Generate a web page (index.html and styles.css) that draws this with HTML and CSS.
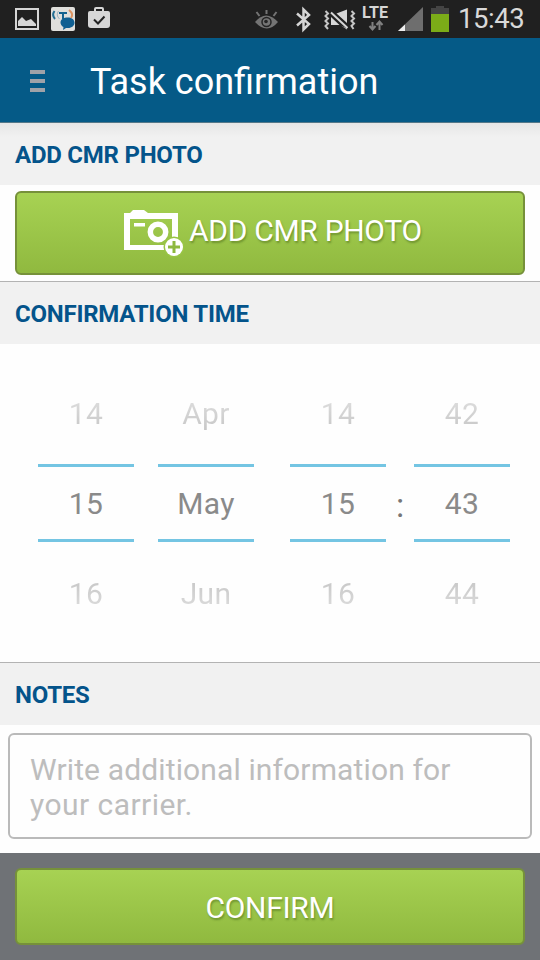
FILE: index.html
```html
<!DOCTYPE html>
<html lang="en">
<head>
<meta charset="utf-8">
<title>Task confirmation</title>
<link rel="stylesheet" href="styles.css">
</head>
<body>
<div class="status">
  <svg class="notifications" width="112" height="38" viewBox="0 0 112 38">
    <rect x="16" y="9" width="22" height="20" fill="none" stroke="#d6d6d6" stroke-width="2"/>
    <path d="M18 26v-5l2-2 2-2 4 4 5-2 5 5v2z" fill="#d6d6d6"/>
    <rect x="51" y="7" width="24" height="24" rx="2" fill="#e0dfdc"/>
    <path d="M54.500 11q-3 4 .5 8" fill="none" stroke="#226d92" stroke-width="2"/>
    <path d="M58.500 11q-3 4 1 8" fill="none" stroke="#9ab3c0" stroke-width="1"/>
    <path d="M69 10q5 4 2 8" fill="none" stroke="#dd9362" stroke-width="2"/>
    <path d="M59 13h8M63 13v6" stroke="#15628f" stroke-width="2"/>
    <path d="M68 17.500c4 0 6.500 2.500 6.500 5.200S72 28 68 28h-2l-3 2 .5-3c-2-1-3-2.700-3-4.500 0-3 3-5 7.500-5z" fill="#115f91"/>
    <path d="M90 11h18a2 2 0 0 1 2 2v12a3 3 0 0 1-3 3H91a3 3 0 0 1-3-3V13a2 2 0 0 1 2-2z" fill="#d6d6d6"/>
    <path d="M95 12V9q0-1 1-1h6q1 0 1 1v3" fill="none" stroke="#d6d6d6" stroke-width="2"/>
    <path d="M94 19.500l4 4 6.500-7" fill="none" stroke="#222" stroke-width="2"/>
  </svg>
  <div class="system">
    <svg width="195" height="38" viewBox="255 0 195 38">
      <path d="M255 22q11-13 23 0-11 13-23 0z" fill="#747474"/>
      <circle cx="266.500" cy="22" r="4.500" fill="none" stroke="#242424" stroke-width="1.500"/>
      <circle cx="266" cy="21.500" r="1.800" fill="#242424"/>
      <path d="M256.500 12l3 4M266.500 10v4M276.500 12l-3 4" stroke="#747474" stroke-width="2"/>
      <path d="M297 13.500l12 10.500-5.500 5.500V9.500l5.500 5.500-12 10.500" fill="none" stroke="#d6d6d6" stroke-width="2.500"/>
      <path d="M331 17v8h8.500zM336.500 13.500L347 9.500v13.500zM341 25.500l6 4v-1z" fill="#d6d6d6"/>
      <path d="M331 12.500l16.500 15.500" stroke="#d6d6d6" stroke-width="2"/>
      <path d="M325.500 11l2.500 2.500-2.500 2.500 2.500 2.500-2.500 2.500 2.500 2.500-2.500 2.500 2.500 3M351.500 11l2.500 2.500-2.500 2.500 2.500 2.500-2.500 2.500 2.500 2.500-2.500 2.500 2 3" fill="none" stroke="#c5c5c5" stroke-width="2"/>
      <text class="network" x="362" y="17.500" textLength="26" lengthAdjust="spacingAndGlyphs">LTE</text>
      <path d="M372.500 22v7M369.500 26l3 3.500 3-3.500M379.500 30v-8M376.500 25l3-3.500 3 3.500" fill="none" stroke="#808080" stroke-width="2"/>
      <path d="M398 31L423 7v24z" fill="#6e6e6e"/>
      <path d="M398 31l7-6.500V31z" fill="#eee"/>
      <path d="M431 14V8h5V6h8v2h5v6z" fill="#444"/>
      <path d="M431 14h18v18h-18z" fill="#7bac18"/>
    </svg>
    <span class="clock">15:43</span>
  </div>
</div>

<header class="appbar">
  <div class="menu"><i></i><i></i><i></i></div>
  <h1>Task confirmation</h1>
</header>

<main>
  <h2 class="section first">ADD CMR PHOTO</h2>
  <div class="photo">
    <button class="btn add">
      <svg width="62" height="50" viewBox="0 0 62 50">
        <path fill="#fff" fill-rule="evenodd" d="M1 4H7L10 1H21L25 4H55V31H49V10H7V36H43V41H1z"/>
        <path d="M11 14h11v3.500H11z" fill="#fff"/>
        <circle cx="35" cy="23" r="7.700" fill="none" stroke="#fff" stroke-width="5.500"/>
        <circle cx="51" cy="38" r="10.500" fill="#99c544"/>
        <circle cx="51" cy="38" r="9" fill="#fff"/>
        <path d="M51 32v12M45 38h12" stroke="#8eb93f" stroke-width="3"/>
      </svg>
      <span>ADD CMR PHOTO</span>
    </button>
  </div>

  <h2 class="section">CONFIRMATION TIME</h2>
  <div class="picker">
    <div class="wheel"><span class="prev">14</span><b>15</b><span class="next">16</span></div>
    <div class="wheel"><span class="prev">Apr</span><b>May</b><span class="next">Jun</span></div>
    <div class="wheel hour"><span class="prev">14</span><b>15</b><span class="next">16</span></div>
    <div class="colon">:</div>
    <div class="wheel"><span class="prev">42</span><b>43</b><span class="next">44</span></div>
  </div>

  <h2 class="section">NOTES</h2>
  <div class="notes">Write additional information for<br><span>your carrier.</span></div>
</main>

<footer class="actions">
  <button class="btn confirm">CONFIRM</button>
</footer>
</body>
</html>
```
FILE: styles.css
```css
* { box-sizing: border-box; }

body {
  margin: 0;
  width: 540px;
  height: 960px;
  display: flex;
  flex-direction: column;
  overflow: hidden;
  background: #fefefe;
  font-family: Roboto, "Liberation Sans", sans-serif;
}

svg { display: block; flex: none; }

.status {
  height: 38px;
  display: flex;
  justify-content: space-between;
  background: #202020;
}

.system {
  display: flex;
  width: 285px;
}

.network {
  font-size: 16px;
  font-weight: 700;
  fill: #d6d6d6;
}

.clock {
  margin-left: 8px;
  line-height: 38px;
  font-size: 27.5px;
  letter-spacing: -.45px;
  color: #d9d9d9;
}

.appbar {
  height: 85px;
  display: flex;
  align-items: center;
  padding-left: 30px;
  background: #055a87;
  border-bottom: 1px solid #547889;
}

.menu {
  width: 15px;
  display: grid;
  gap: 5px;
  margin: 2px 45px 0 0;
}

.menu i {
  height: 4px;
  background: #a0a2a8;
}

h1 {
  margin: 3px 0 0;
  font-size: 36px;
  font-weight: 400;
  line-height: 44px;
  color: #fff;
  white-space: nowrap;
}

.section {
  height: 63px;
  margin: 0;
  padding-left: 15px;
  border-top: 1px solid #b3b3b3;
  background: #f1f1f1;
  color: #04548b;
  font-size: 24px;
  font-weight: 700;
  letter-spacing: -.24px;
  line-height: 64px;
  white-space: nowrap;
}

.section.first {
  height: 62px;
  border-top: 0;
  background: linear-gradient(#e6e6e6, #f1f1f1 14px);
}

.photo {
  height: 96px;
  padding: 6px 15px;
}

.btn {
  display: flex;
  align-items: center;
  justify-content: center;
  width: 510px;
  padding: 0;
  border: 2px solid #76913a;
  border-radius: 6px;
  background: linear-gradient(#a7d253, #90b93f);
  color: #fff;
  font: 400 30px/36px Roboto, "Liberation Sans", sans-serif;
  letter-spacing: -.3px;
  text-shadow: 1px 2px 2px rgba(60, 90, 20, .45);
}

.btn.add {
  height: 84px;
  justify-content: flex-start;
  padding-left: 106px;
}

.btn.add svg { margin-top: 2px; }

.btn.add span { margin: -5px 0 0 4px; }

.picker {
  height: 318px;
  display: flex;
  padding: 30px 30px 0 38px;
}

.wheel {
  width: 96px;
  margin-right: 24px;
  display: grid;
  grid-template-rows: 90px 78px 90px;
  text-align: center;
  font-size: 30px;
  letter-spacing: .3px;
}

.wheel span,
.wheel b {
  font-weight: 400;
}

.wheel .prev,
.wheel .next {
  color: transparent;
  background: linear-gradient(#dedede, #c6c6c6) center 24px / 100% 34px no-repeat;
  background-clip: text;
}

.wheel .prev { line-height: 80px; }

.wheel .next {
  line-height: 103px;
  background-image: linear-gradient(#c6c6c6, #dedede);
  background-position: center 36px;
}

.wheel b {
  border: solid #74c5e3;
  border-width: 3px 0;
  line-height: 73px;
  color: #8a8a8a;
}

.wheel + .wheel.hour { margin: 0 0 0 12px; }

.colon {
  width: 28px;
  padding-top: 91px;
  text-align: center;
  line-height: 80px;
  font-size: 34px;
  color: #777;
}

.colon + .wheel { margin: 0; }

.notes {
  height: 106px;
  margin: 8px 8px 14px;
  padding: 17px 20px;
  border: 2px solid #bababa;
  border-radius: 6px;
  color: #bdbdbd;
  font-size: 30px;
  letter-spacing: .13px;
  line-height: 35px;
  white-space: nowrap;
}

.notes span { letter-spacing: .45px; }

.actions {
  height: 107px;
  padding: 15px;
  background: #6f7276;
}

.confirm {
  height: 77px;
  padding-top: 2px;
}
```
